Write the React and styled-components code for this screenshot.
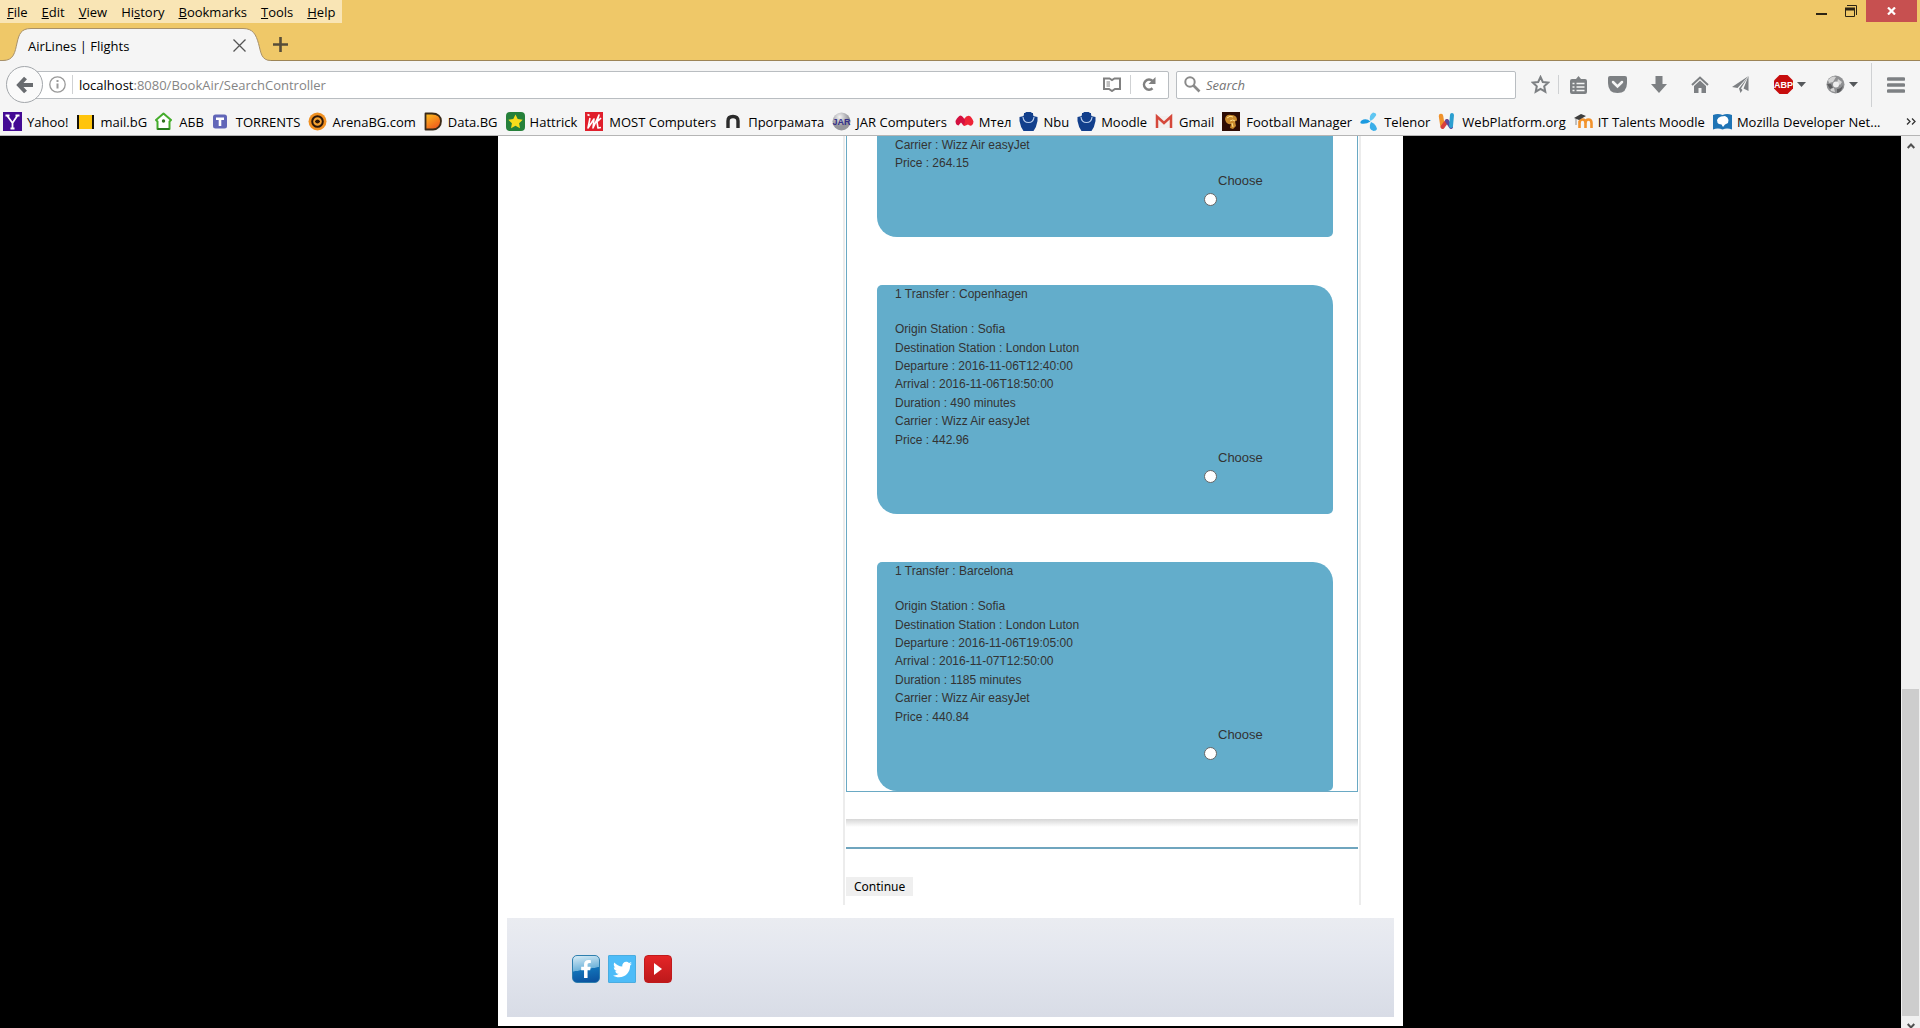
import React from "react";
import styled, { createGlobalStyle } from "styled-components";
import { FaTwitter, FaFacebookF } from "react-icons/fa";

const uiFont = '"Open Sans", "Noto Sans", sans-serif';
const textFont = '"Liberation Sans", Arial, sans-serif';
const grey = "#7d8083";

const GlobalStyle = createGlobalStyle`
  * { box-sizing: border-box; }
  body { margin: 0; background: #000; font-family: ${uiFont}; }
  button, input { font: inherit; margin: 0; }
  svg { display: block; flex: none; }
  ul { list-style: none; margin: 0; padding: 0; }
`;

const Window = styled.div`
  display: flex;
  flex-direction: column;
  height: 100vh;
  overflow: hidden;
  font-size: 13px;
`;

/* ---------- title bar ---------- */
const TitleBar = styled.header`
  display: flex;
  justify-content: space-between;
  align-items: flex-start;
  background: #efc868;
`;
const MenuBar = styled.nav`
  display: flex;
  gap: 14px;
  height: 23px;
  padding: 0 7px;
  background: #f9e5b5;
`;
const MenuButton = styled.button`
  padding: 0;
  border: 0;
  background: none;
  color: #000;
  line-height: 24px;
`;
const WindowControls = styled.div`
  display: flex;
  padding-right: 3px;
`;
const WindowButton = styled.button`
  display: flex;
  align-items: center;
  justify-content: center;
  width: ${(p) => (p.$close ? 51 : 30)}px;
  height: 22px;
  padding: 0;
  border: 0;
  background: ${(p) => (p.$close ? "#c75050" : "none")};
`;
const TabStrip = styled.div`
  display: flex;
  height: 38px;
  background: #efc868;
  border-bottom: 1px solid #9c8456;
`;
const Tab = styled.div`
  position: relative;
  display: flex;
  align-items: center;
  justify-content: space-between;
  width: 271px;
  height: 38px;
  padding: 7px 25px 0 28px;
`;
const TabShape = styled.svg`
  position: absolute;
  left: 0;
  bottom: 0;
`;
const TabTitle = styled.span`
  position: relative;
`;
const PlainButton = styled.button`
  position: relative;
  display: flex;
  align-items: center;
  justify-content: center;
  gap: 4px;
  padding: 0;
  border: 0;
  background: none;
  color: ${grey};
`;
const NewTab = styled(PlainButton)`
  margin-left: 2px;
  padding-top: 6px;
`;

/* ---------- navigation bar ---------- */
const NavBar = styled.div`
  display: flex;
  align-items: center;
  height: 47px;
  background: #f5f5f5;
`;
const BackButton = styled.button`
  display: flex;
  align-items: center;
  justify-content: center;
  z-index: 1;
  width: 37px;
  height: 37px;
  margin-left: 6px;
  padding: 0;
  border: 1px solid #a3a7ab;
  border-radius: 50%;
  background: #fafafa;
`;
const AddressBox = styled.div`
  display: flex;
  flex: 1;
  align-items: center;
  height: 28px;
  margin-left: -19px;
  padding-left: 17px;
  border: 1px solid #b9bdc1;
  border-radius: 2px;
  background: #fff;
`;
const Divider = styled.span`
  flex: none;
  width: 1px;
  height: ${(p) => p.$h || 19}px;
  background: #cfd1d3;
`;
const Address = styled.p`
  flex: 1;
  margin: 0 0 0 6px;
  color: #858585;
  b { color: #000; font-weight: 400; }
`;
const AddressButton = styled(PlainButton)`
  width: ${(p) => p.$w}px;
  height: 26px;
`;
const SearchBox = styled.label`
  display: flex;
  align-items: center;
  gap: 5px;
  width: 340px;
  height: 28px;
  margin-left: 7px;
  padding-left: 7px;
  border: 1px solid #b9bdc1;
  border-radius: 2px;
  background: #fff;
`;
const SearchInput = styled.input`
  flex: 1;
  min-width: 0;
  padding: 0;
  border: 0;
  outline: 0;
  background: none;
  &::placeholder { color: #757575; font-style: italic; opacity: 1; }
`;
const Tool = styled(PlainButton)`
  flex: none;
  width: ${(p) => p.$w || 41}px;
  height: 47px;
`;
const ToolGroup = styled.div`
  display: flex;
  padding-left: ${(p) => p.$before}px;
  padding-right: ${(p) => p.$after || 0}px;
`;

/* ---------- bookmarks ---------- */
const Bookmarks = styled.nav`
  display: flex;
  align-items: center;
  gap: 8px;
  height: 28px;
  padding: 0 4px 0 3px;
  border-bottom: 1px solid #b5b5b5;
  background: #f5f5f5;
`;
const Bookmark = styled.a`
  display: flex;
  align-items: center;
  gap: 5px;
  color: #000;
  text-decoration: none;
  white-space: nowrap;
`;
const More = styled(PlainButton)`
  margin-left: auto;
`;

/* ---------- page ---------- */
const Viewport = styled.div`
  display: flex;
  flex: 1;
  min-height: 0;
  background: #000;
`;
const Scroller = styled.main`
  flex: 1;
  overflow: hidden;
`;
const Page = styled.div`
  display: flex;
  flex-direction: column;
  gap: 13px;
  max-width: 905px;
  margin: 0 auto;
  padding: 0 9px 9px;
  background: #fff;
`;
const Column = styled.section`
  align-self: flex-end;
  width: 518px;
  margin-right: 33px;
  padding: 0 1px 9px;
  border: solid #ececec;
  border-width: 0 2px;
`;
const Flights = styled.div`
  display: flex;
  flex-direction: column;
  gap: 48px;
  padding: 0 24px 0 30px;
  border: solid #6aa9c4;
  border-width: 0 1px 1px;
`;
const Card = styled.article`
  display: flex;
  flex-direction: column;
  padding: 0 18px 29px;
  border-radius: ${(p) => (p.$cut ? "0 0 5px 20px" : "5px 20px 5px 20px")};
  background: #63adcb;
  color: #333;
  font: 12px/18px ${textFont};
`;
const CardTitle = styled.h3`
  margin: 0 0 17px;
  font: inherit;
`;
const Details = styled.ul`
  display: grid;
  grid-auto-rows: 1fr;
  align-items: center;
  height: ${(p) => (p.$short ? 36 : 129)}px;
`;
const Choice = styled.label`
  display: flex;
  flex-direction: column;
  align-self: flex-end;
  width: 111px;
  font-size: 13px;
  span { padding-left: 14px; }
`;
const Radio = styled.input`
  appearance: none;
  width: 13px;
  height: 13px;
  margin: 3px 0 2px;
  border: 1px solid #666;
  border-radius: 50%;
  background: #fff;
  &:checked { border-width: 4px; }
`;
const Shade = styled.div`
  height: 8px;
  margin-top: 27px;
  background: linear-gradient(#d6d6d6, #fff);
`;
const Rule = styled.hr`
  height: 2px;
  margin: 20px 0 28px;
  border: 0;
  background: #6fa5be;
`;
const Continue = styled.button`
  display: block;
  height: 19px;
  padding: 0 8px;
  border: 0;
  background: #efefef;
  color: #000;
  font: 12px/19px "Noto Sans", sans-serif;
`;
const Footer = styled.footer`
  display: flex;
  align-items: center;
  gap: 8px;
  height: 99px;
  padding: 3px 65px 0;
  background: linear-gradient(#eaecf1, #e4e7ef 35%, #d8dce6);
`;
const Social = styled.a`
  display: flex;
  align-items: center;
  justify-content: center;
  width: 28px;
  height: 28px;
  border: 1px solid ${(p) => p.$edge};
  border-radius: ${(p) => p.$radius}px;
  background: ${(p) => p.$bg};
  color: #fff;
`;

/* ---------- scroll bar ---------- */
const ScrollBar = styled.div`
  display: flex;
  flex-direction: column;
  align-items: center;
  width: 19px;
  background: #f0f0f0;
`;
const ScrollButton = styled(PlainButton)`
  width: 19px;
  height: 19px;
  flex: none;
`;
const Track = styled.div`
  display: flex;
  flex-direction: column;
  justify-content: flex-end;
  flex: 1;
  width: 17px;
`;
const Thumb = styled.div`
  height: 38%;
  background: #cdcdcd;
`;
const ScrollEnd = styled.div`
  height: 12px;
  overflow: hidden;
`;

/* ---------- icons ---------- */
const Caret = () => (
  <svg width="9" height="5" viewBox="0 0 9 5"><path d="M0 0h9L4.5 5z" fill="#55585b" /></svg>
);

const Icon = ({ children }) => (
  <svg width="19" height="19" viewBox="0 0 19 19" aria-hidden="true">{children}</svg>
);

const YahooIcon = () => (
  <Icon>
    <rect width="19" height="19" fill="#440a94" />
    <path d="M4 3.5l5.5 7.5 5-7.5M9.500 11v6M2.500 3.500h4M12.500 3.500h4M7.500 16.500h4" stroke="#fff" strokeWidth="1.800" fill="none" />
  </Icon>
);
const MailIcon = () => (
  <Icon><rect y="3" width="17" height="14" fill="#ffc40c" /><path d="M1 3v14M16 3v14" stroke="#15120a" strokeWidth="2" /></Icon>
);
const HouseIcon = () => (
  <Icon>
    <path d="M8.500 1.500L16 8l-1.500 1.500v7.500h-12V9.500L1 8z" fill="#fff" stroke="#45ad2c" strokeWidth="2" strokeLinejoin="round" />
    <path d="M2.500 17h12" stroke="#287b1d" strokeWidth="2" /><circle cx="8.500" cy="9" r="1.700" fill="#31731f" />
  </Icon>
);
const TorrentsIcon = () => (
  <Icon>
    <rect x="1" y="2.500" width="14" height="14" rx="2.500" fill="#6166b8" /><path d="M4 5.500h8v2.500H9.300v6H6.700V8H4z" fill="#fff" />
  </Icon>
);
const ArenaIcon = () => (
  <Icon>
    <circle cx="9.500" cy="9.500" r="9" fill="#f09021" /><circle cx="9.500" cy="9.500" r="5.300" fill="#f4a232" stroke="#2c1608" strokeWidth="2" />
    <circle cx="9.500" cy="9.500" r="2" fill="#2c1608" /><path d="M7 9.500h5" stroke="#2c1608" strokeWidth="1.500" />
  </Icon>
);
const DataIcon = () => (
  <Icon>
    <defs><linearGradient id="data" x2=".6" y2="1"><stop stopColor="#ffc41f" /><stop offset="1" stopColor="#f05a1c" /></linearGradient></defs>
    <path d="M1.500 1.500H8c6 0 9 3 9 7.500s-3 8.500-8 8.500H1.500z" fill="url(#data)" stroke="#3a2a18" strokeWidth="1.800" strokeLinejoin="round" />
  </Icon>
);
const HattrickIcon = () => (
  <Icon>
    <rect width="19" height="19" rx="4" fill="#25803a" />
    <path d="M9.500 2.500l2.200 4.500 5 .7-3.600 3.500.9 5-4.500-2.400L5 16.200l.9-5L2.300 7.700l5-.7z" fill="#f8dc1c" />
  </Icon>
);
const MostIcon = () => (
  <Icon>
    <rect width="18" height="19" fill="#e01f2c" />
    <path d="M5 6L3 16l6-9-1 9 6-13-2 7 1 6 3-.5M2.500 2.500l2 1M13 9l3-3" stroke="#fff" strokeWidth="1.600" fill="none" strokeLinejoin="round" />
  </Icon>
);
const ArchIcon = () => (
  <Icon><path d="M4 16V9q0-4.500 5-4.500t5 4.500v7" stroke="#2b2b2b" strokeWidth="3.400" fill="none" /></Icon>
);
const JarIcon = () => (
  <Icon>
    <defs><radialGradient id="jar" cx=".4" cy=".25"><stop stopColor="#f4f4f4" /><stop offset="1" stopColor="#96969c" /></radialGradient></defs>
    <circle cx="9.500" cy="9.500" r="9" fill="url(#jar)" />
    <text x="9.500" y="13" textAnchor="middle" fontFamily="Liberation Sans" fontWeight="700" fontSize="9" fill="#35308a">JAR</text>
  </Icon>
);
const MtelIcon = () => (
  <Icon>
    <path d="M9 7q3-4 5.500-3 2 .5 4 5.500 0 3-2 4-2 .5-3.500-1L9.500 14Q7 13 8 11z" fill="#ee2437" />
    <path d="M.500 9Q3 4 5.500 3.500 8 4 10 8.500q0 3-1.500 5L6 10.500l-2.500 3Q.500 13 .500 9z" fill="#d3103f" />
  </Icon>
);
const NbuIcon = () => (
  <Icon>
    <path d="M5 1h9v3l4.500 1v4q-1 6-4 10h-10q-3-4-4-10V5L5 4z" fill="#123f8c" />
    <circle cx="9.500" cy="4.500" r="5" fill="#123f8c" />
    <path d="M4 5q.5 5.500 5.500 5.500T15 5" fill="none" stroke="#b9cdec" strokeWidth="1.200" />
  </Icon>
);
const GmailIcon = () => (
  <Icon>
    <path d="M2 4h14v12H2z" fill="#f2efee" /><path d="M2 16V4.500l7 6.500 7-6.500V16" fill="none" stroke="#d5483b" strokeWidth="2.500" />
  </Icon>
);
const ManagerIcon = () => (
  <Icon>
    <rect width="18" height="19" fill="#2d0c04" />
    <path d="M3 7q1-5 6-4 6 0 6 5-1 2-2 1l1 5-3 3-3-1 1-4q-5 1-6-5z" fill="#c98a2e" /><path d="M5 6q3-3 6-1M8 9q3-2 5 0M10 11l1 4" stroke="#ffe08a" fill="none" />
  </Icon>
);
const TelenorIcon = () => (
  <Icon>
    <path d="M10.500 9Q8 4 13 .5q4 .5 3 3Q14 7 10.500 9z" fill="#5fc6f2" />
    <path d="M10.500 9.500Q6 5.500 1.500 8.500-.500 10.500 1 11.500q5 1 9.500-2z" fill="#1b9ae0" />
    <path d="M11 10q-3.500 7 2.500 9 3 0 3.500-2-1-5-6-7z" fill="#39aee9" />
  </Icon>
);
const WebPlatformIcon = () => (
  <Icon>
    <path d="M3 4l1.500 10" stroke="#f0922b" strokeWidth="4.500" strokeLinecap="round" />
    <path d="M4.500 15l4.500-6" stroke="#d8403f" strokeWidth="4" strokeLinecap="round" />
    <path d="M9 9l4 6" stroke="#5b4a9f" strokeWidth="4" strokeLinecap="round" />
    <path d="M13 14l1-11" stroke="#2b9fd0" strokeWidth="4" strokeLinecap="round" />
  </Icon>
);
const MoodleIcon = () => (
  <Icon>
    <path d="M5.500 16V9M5.500 11q0-3.500 3-3.500t3 3.500v5M11.500 11q0-3.500 3-3.500t3 3.500v5" stroke="#f2932c" strokeWidth="2.600" fill="none" />
    <path d="M0 6l7-4 5 2-7 4z" fill="#3d3d3d" /><path d="M2 7v6" stroke="#8c8c8c" />
  </Icon>
);
const MdnIcon = () => (
  <Icon>
    <path d="M0 3q5-2 9.500 0Q14 1 19 3v14.500q-5-2-9.500 0-4.500-2-9.500 0z" fill="#1f74b5" />
    <path d="M4 8q1-3 4-3.500l4-.5q3 1 3.500 4l-.5 3-3 1.500-2 2.500-1.500-2.500L6 12Q4 11 4 8z" fill="#fff" />
  </Icon>
);

const bookmarks = [
  ["Yahoo!", YahooIcon],
  ["mail.bG", MailIcon],
  ["АБВ", HouseIcon],
  ["TORRENTS", TorrentsIcon],
  ["ArenaBG.com", ArenaIcon],
  ["Data.BG", DataIcon],
  ["Hattrick", HattrickIcon],
  ["MOST Computers", MostIcon],
  ["Програмата", ArchIcon],
  ["JAR Computers", JarIcon],
  ["Мтел", MtelIcon],
  ["Nbu", NbuIcon],
  ["Moodle", NbuIcon],
  ["Gmail", GmailIcon],
  ["Football Manager", ManagerIcon],
  ["Telenor", TelenorIcon],
  ["WebPlatform.org", WebPlatformIcon],
  ["IT Talents Moodle", MoodleIcon],
  ["Mozilla Developer Net...", MdnIcon],
];

const menus = [
  ["", "F", "ile"],
  ["", "E", "dit"],
  ["", "V", "iew"],
  ["Hi", "s", "tory"],
  ["", "B", "ookmarks"],
  ["", "T", "ools"],
  ["", "H", "elp"],
];

const flights = [
  { id: "first", lines: ["Carrier : Wizz Air easyJet", "Price : 264.15"] },
  {
    id: "copenhagen",
    title: "1 Transfer : Copenhagen",
    lines: [
      "Origin Station : Sofia",
      "Destination Station : London Luton",
      "Departure : 2016-11-06T12:40:00",
      "Arrival : 2016-11-06T18:50:00",
      "Duration : 490 minutes",
      "Carrier : Wizz Air easyJet",
      "Price : 442.96",
    ],
  },
  {
    id: "barcelona",
    title: "1 Transfer : Barcelona",
    lines: [
      "Origin Station : Sofia",
      "Destination Station : London Luton",
      "Departure : 2016-11-06T19:05:00",
      "Arrival : 2016-11-07T12:50:00",
      "Duration : 1185 minutes",
      "Carrier : Wizz Air easyJet",
      "Price : 440.84",
    ],
  },
];

function Toolbar() {
  return (
    <NavBar>
      <BackButton aria-label="Back">
        <svg width="18" height="18" viewBox="0 0 18 18"><path d="M9.500 2L3 9l6.500 7M4 9h13" fill="none" stroke="#696c70" strokeWidth="4" /></svg>
      </BackButton>
      <AddressBox>
        <AddressButton $w={30} aria-label="Site information">
          <svg width="17" height="17" viewBox="0 0 17 17"><circle cx="8.500" cy="8.500" r="7.700" fill="none" stroke="#999" strokeWidth="1.300" /><path d="M8.500 7.500v5M8.500 4v2" stroke="#999" strokeWidth="2" /></svg>
        </AddressButton>
        <Divider />
        <Address><b>localhost</b>:8080/BookAir/SearchController</Address>
        <AddressButton $w={36} aria-label="Reader view">
          <svg width="18" height="15" viewBox="0 0 18 15">
            <path d="M1 1.500h5.500L9 3l2.500-1.500H17v10.500h-5L9 14l-3-2H1z" fill="none" stroke="#808080" strokeWidth="2" />
            <path d="M3.500 5H7M3.500 7H7M3.500 9H7" stroke="#808080" />
          </svg>
        </AddressButton>
        <Divider />
        <AddressButton $w={37} aria-label="Reload">
          <svg width="15" height="15" viewBox="0 0 15 15"><path d="M10.500 11.200A5 5 0 1 1 10.500 4" fill="none" stroke="#808080" strokeWidth="2.600" /><path d="M13.500 0v7h-7z" fill="#808080" /></svg>
        </AddressButton>
      </AddressBox>
      <SearchBox>
        <svg width="17" height="17" viewBox="0 0 17 17"><circle cx="6" cy="6" r="4.700" fill="none" stroke="#8a8a8a" strokeWidth="2" /><path d="M9.500 9.500l6 6" stroke="#8a8a8a" strokeWidth="2.600" /></svg>
        <SearchInput aria-label="Search" placeholder="Search" />
      </SearchBox>
      <ToolGroup $before={6}>
        <Tool $w={36} aria-label="Bookmark this page">
          <svg width="19" height="19" viewBox="0 0 19 19"><path d="M9.500 2l2.300 5 5.400.6-4 3.700 1.100 5.400-4.800-2.700-4.800 2.700 1.100-5.400-4-3.700L7.200 7z" fill="none" stroke={grey} strokeWidth="2" /></svg>
        </Tool>
      </ToolGroup>
      <Divider />
      <Tool $w={38} aria-label="Bookmarks list">
        <svg width="17" height="18" viewBox="0 0 17 18"><path d="M2 3h4l2.500-3L11 3h4q2 0 2 2v11q0 2-2 2H2q-2 0-2-2V5q0-2 2-2z" fill={grey} /><path d="M2.500 7.500h2M6.500 7.500h8M2.500 11h2M6.500 11h8M2.500 14.500h2M6.500 14.500h8" stroke="#f5f5f5" strokeWidth="1.500" /></svg>
      </Tool>
      <Tool aria-label="Pocket">
        <svg width="19" height="17" viewBox="0 0 19 17"><path d="M2 0h15q2 0 2 2v5q0 10-9.500 10T0 7V2q0-2 2-2z" fill={grey} /><path d="M5 6l4.500 4.500L14 6" fill="none" stroke="#f5f5f5" strokeWidth="2.500" strokeLinecap="round" /></svg>
      </Tool>
      <Tool aria-label="Downloads">
        <svg width="16" height="17" viewBox="0 0 16 17"><path d="M4.500 0h7v8H16l-8 9-8-9h4.500z" fill={grey} /></svg>
      </Tool>
      <Tool aria-label="Home">
        <svg width="18" height="17" viewBox="0 0 18 17"><path d="M1 9l8-7.500L17 9" fill="none" stroke={grey} strokeWidth="2" /><path d="M3 10l6-5.500L15 10v7h-4.500v-5h-3v5H3z" fill={grey} /></svg>
      </Tool>
      <Tool aria-label="Share">
        <svg width="17" height="17" viewBox="0 0 17 17"><path d="M16.500 0L0 11l5.500 1zM16.500 0v15l-5-2.500zM16 1L7 12.500l1.500 4.500 2-3-1.500-1.500z" fill={grey} /></svg>
      </Tool>
      <ToolGroup $before={3} $after={3}>
        <Tool $w={52} aria-label="Adblock">
          <svg width="19" height="19" viewBox="0 0 19 19">
            <path d="M5.500 0h8L19 5.500v8L13.500 19h-8L0 13.500v-8z" fill="#c70d0d" />
            <text x="9.500" y="13" textAnchor="middle" fontFamily="Liberation Sans" fontWeight="700" fontSize="9" fill="#fff">ABP</text>
          </svg>
          <Caret />
        </Tool>
        <Tool $w={52} aria-label="Extension">
          <svg width="19" height="19" viewBox="0 0 19 19">
            <circle cx="9.500" cy="9.500" r="9" fill="#8f9092" /><path d="M2 5q4-5 8-3l-3 5-4 1zM12 4l4 3-2 3-3-2zM4 12l4 1 1 4-4-1z" fill="#d4d4d4" />
            <circle cx="10" cy="9.500" r="3" fill="#eee" /><path d="M11 14q4 0 6-4-1 7-6 8zM1 9l4 0 2 4-3 1z" fill="#5d5e60" />
          </svg>
          <Caret />
        </Tool>
      </ToolGroup>
      <Divider $h={44} />
      <Tool $w={48} aria-label="Menu">
        <svg width="18" height="16" viewBox="0 0 18 16"><path d="M1.500 2h15M1.500 8h15M1.500 14h15" stroke={grey} strokeWidth="3.600" strokeLinecap="round" /></svg>
      </Tool>
    </NavBar>
  );
}

function FlightCard({ flight }) {
  return (
    <Card $cut={!flight.title}>
      {flight.title && <CardTitle>{flight.title}</CardTitle>}
      <Details $short={!flight.title}>
        {flight.lines.map((line) => <li key={line}>{line}</li>)}
      </Details>
      <Choice>
        <span>Choose</span>
        <Radio type="radio" name="flight" value={flight.id} />
      </Choice>
    </Card>
  );
}

export default function App() {
  return (
    <Window>
      <GlobalStyle />
      <TitleBar>
        <MenuBar>
          {menus.map(([before, key, after]) => (
            <MenuButton key={after}>{before}<u>{key}</u>{after}</MenuButton>
          ))}
        </MenuBar>
        <WindowControls>
          <WindowButton aria-label="Minimize"><svg width="11" height="14" viewBox="0 0 11 14"><path d="M0 10h11" stroke="#2c2414" strokeWidth="2" /></svg></WindowButton>
          <WindowButton aria-label="Restore"><svg width="12" height="12" viewBox="0 0 12 12"><path d="M2 .5h9.500V10M.5 3.500h9v8h-9z" fill="none" stroke="#2c2414" /><path d="M0 4h10" stroke="#2c2414" strokeWidth="3" /></svg></WindowButton>
          <WindowButton $close aria-label="Close"><svg width="9" height="8" viewBox="0 0 9 8"><path d="M1 .5l7 7M8 .5l-7 7" stroke="#fff" strokeWidth="2.200" /></svg></WindowButton>
        </WindowControls>
      </TitleBar>
      <TabStrip>
        <Tab>
          <TabShape width="271" height="34" viewBox="0 0 271 34">
            <path d="M0 34v-.5h3C14 33.500 15 25 17 16S21 1.500 31 1.500h212c10 0 13 6 15.500 15S261 33.500 271 33.500v.5z" fill="#f5f5f5" />
            <path d="M0 33.500h3C14 33.500 15 25 17 16S21 1.500 31 1.500h212c10 0 13 6 15.500 15S261 33.500 271 33.500" fill="none" stroke="#a8916a" />
            <path d="M10 33.500h254" stroke="#f5f5f5" />
          </TabShape>
          <TabTitle>AirLines | Flights</TabTitle>
          <PlainButton aria-label="Close tab"><svg width="13" height="13" viewBox="0 0 13 13"><path d="M.5.500l12 12M12.500.500l-12 12" stroke="#555" strokeWidth="1.300" /></svg></PlainButton>
        </Tab>
        <NewTab aria-label="New tab"><svg width="15" height="15" viewBox="0 0 15 15"><path d="M7.500 0v15M0 7.500h15" stroke="#574d38" strokeWidth="2.600" /></svg></NewTab>
      </TabStrip>
      <Toolbar />
      <Bookmarks>
        {bookmarks.map(([name, Glyph]) => (
          <Bookmark href="#" key={name}><Glyph />{name}</Bookmark>
        ))}
        <More aria-label="More bookmarks"><svg width="10" height="7" viewBox="0 0 10 7"><path d="M1 .5l3 3-3 3M6 .5l3 3-3 3" fill="none" stroke="#333" strokeWidth="1.300" /></svg></More>
      </Bookmarks>
      <Viewport>
        <Scroller>
          <Page>
            <Column>
              <Flights>
                {flights.map((flight) => <FlightCard key={flight.id} flight={flight} />)}
              </Flights>
              <Shade />
              <Rule />
              <Continue>Continue</Continue>
            </Column>
            <Footer>
              <Social href="#" aria-label="Facebook" $radius={5} $edge="#2f7fae" $bg="linear-gradient(170deg, #d8ecf6, #6fb3da 50%, #1272b8 52%, #0a4f9c)"><FaFacebookF size={18} /></Social>
              <Social href="#" aria-label="Twitter" $radius={1} $edge="#4aace0" $bg="#4dbcf8"><FaTwitter size={19} /></Social>
              <Social href="#" aria-label="YouTube" $radius={4} $edge="#c01a1c" $bg="linear-gradient(#e42527, #bd191b)"><svg width="8" height="12" viewBox="0 0 8 12"><path d="M0 0l8 6-8 6z" fill="#fff" /></svg></Social>
            </Footer>
          </Page>
        </Scroller>
        <ScrollBar>
          <ScrollButton aria-label="Scroll up"><svg width="8" height="6" viewBox="0 0 8 6"><path d="M.7 5L4 1.500 7.300 5" fill="none" stroke="#505050" strokeWidth="2" /></svg></ScrollButton>
          <Track><Thumb /></Track>
          <ScrollEnd><ScrollButton aria-label="Scroll down"><svg width="8" height="6" viewBox="0 0 8 6"><path d="M.7 1L4 4.500 7.300 1" fill="none" stroke="#505050" strokeWidth="2" /></svg></ScrollButton></ScrollEnd>
        </ScrollBar>
      </Viewport>
    </Window>
  );
}
